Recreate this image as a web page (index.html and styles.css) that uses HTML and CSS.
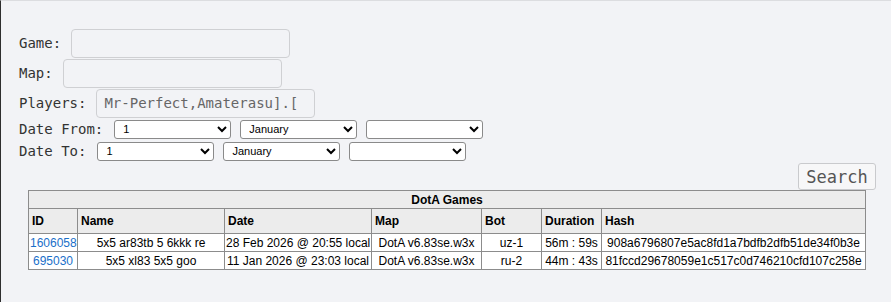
FILE: index.html
```html
<!DOCTYPE html>
<html lang="en">
<head>
    <meta charset="UTF-8">
    <title>DotA Games</title>
    <link rel="stylesheet" href="styles.css">
</head>
<body>

<div class="page">
    <form class="search-form">
        <div class="row">
            <label for="game">Game:</label>
            <input type="text" id="game" class="text-field">
        </div>
        <div class="row">
            <label for="map">Map:</label>
            <input type="text" id="map" class="text-field">
        </div>
        <div class="row">
            <label for="players">Players:</label>
            <input type="text" id="players" class="text-field" value="Mr-Perfect,Amaterasu].[">
        </div>
        <div class="row date-row">
            <label>Date From:</label>
            <select class="date-select"><option>1</option></select>
            <select class="date-select"><option>January</option></select>
            <select class="date-select"><option></option></select>
        </div>
        <div class="row date-row">
            <label>Date To:</label>
            <select class="date-select"><option>1</option></select>
            <select class="date-select"><option>January</option></select>
            <select class="date-select"><option></option></select>
        </div>
        <div class="actions">
            <button type="button" class="search-button">Search</button>
        </div>
    </form>

    <table class="games">
        <colgroup>
            <col class="col-id">
            <col class="col-name">
            <col class="col-date">
            <col class="col-map">
            <col class="col-bot">
            <col class="col-dur">
            <col class="col-hash">
        </colgroup>
        <tr class="title-row">
            <th colspan="7">DotA Games</th>
        </tr>
        <tr class="head-row">
            <th>ID</th>
            <th>Name</th>
            <th>Date</th>
            <th>Map</th>
            <th>Bot</th>
            <th>Duration</th>
            <th>Hash</th>
        </tr>
        <tr>
            <td><a href="#">1606058</a></td>
            <td>5x5 ar83tb 5 6kkk re</td>
            <td>28 Feb 2026 @ 20:55 local</td>
            <td>DotA v6.83se.w3x</td>
            <td>uz-1</td>
            <td>56m : 59s</td>
            <td>908a6796807e5ac8fd1a7bdfb2dfb51de34f0b3e</td>
        </tr>
        <tr>
            <td><a href="#">695030</a></td>
            <td>5x5 xl83 5x5 goo</td>
            <td>11 Jan 2026 @ 23:03 local</td>
            <td>DotA v6.83se.w3x</td>
            <td>ru-2</td>
            <td>44m : 43s</td>
            <td>81fccd29678059e1c517c0d746210cfd107c258e</td>
        </tr>
    </table>
</div>

</body>
</html>
```

FILE: styles.css
```css
html, body {
    margin: 0;
    padding: 0;
    background-color: #f2f3f6;
}
.page {
    height: 301px;
    border-top: 1px solid #dcdde0;
    border-left: 1px solid #2e2e2e;
    overflow: hidden;
}
.search-form {
    padding: 27px 0 0 18px;
}
.row {
    display: flex;
    align-items: center;
    height: 30px;
    gap: 10px;
}
.row label {
    font-family: "DejaVu Sans Mono", monospace;
    font-size: 14px;
    color: #333;
}
.text-field {
    box-sizing: border-box;
    width: 219px;
    height: 29px;
    margin: 0;
    padding: 0 6px 0 7px;
    font-family: "DejaVu Sans Mono", monospace;
    font-size: 14px;
    color: #666;
    background-color: #f2f3f6;
    border: 1px solid #cfd0d3;
    border-radius: 4px;
}
.date-row {
    height: 22px;
    gap: 9px;
}
.date-row label {
    margin-right: 2px;
}
.date-select {
    box-sizing: border-box;
    width: 117px;
    height: 19px;
    margin: 0;
    padding: 0 4px;
    font-family: "Liberation Sans", Arial, sans-serif;
    font-size: 11px;
    color: #000;
    background-color: white;
    border: 1px solid #8a8a8a;
    border-radius: 3px;
}
.actions {
    display: flex;
    justify-content: flex-end;
    padding: 1px 15px 0 0;
}
.search-button {
    box-sizing: border-box;
    height: 27px;
    width: 78px;
    margin: 0;
    padding: 0;
    font-family: "DejaVu Sans Mono", monospace;
    font-size: 17px;
    color: #555;
    background-color: #f7f7f8;
    border: 1px solid #c9cacd;
    border-radius: 3px;
}
.games {
    margin-left: 27px;
    width: 837px;
    table-layout: fixed;
    border-collapse: collapse;
    border: 1px solid #8c8c8c;
    font-family: "Liberation Sans", Arial, sans-serif;
    font-size: 12px;
    color: #000;
    background-color: white;
}
.games th,
.games td {
    border: 1px solid #8c8c8c;
    padding: 0 2px;
    white-space: nowrap;
    overflow: hidden;
}
.games th {
    background-color: #ececec;
    text-align: left;
    font-weight: bold;
}
.title-row th {
    text-align: center;
    height: 17px;
}
.head-row th {
    height: 24px;
    padding-left: 3px;
}
.games td {
    text-align: center;
    height: 17px;
    padding: 0 1px;
}
.games a {
    color: #1a6fc9;
    text-decoration: none;
}
.col-id { width: 49px; }
.col-name { width: 147px; }
.col-date { width: 147px; }
.col-map { width: 110px; }
.col-bot { width: 60px; }
.col-dur { width: 60px; }
.col-hash { width: 264px; }
```
